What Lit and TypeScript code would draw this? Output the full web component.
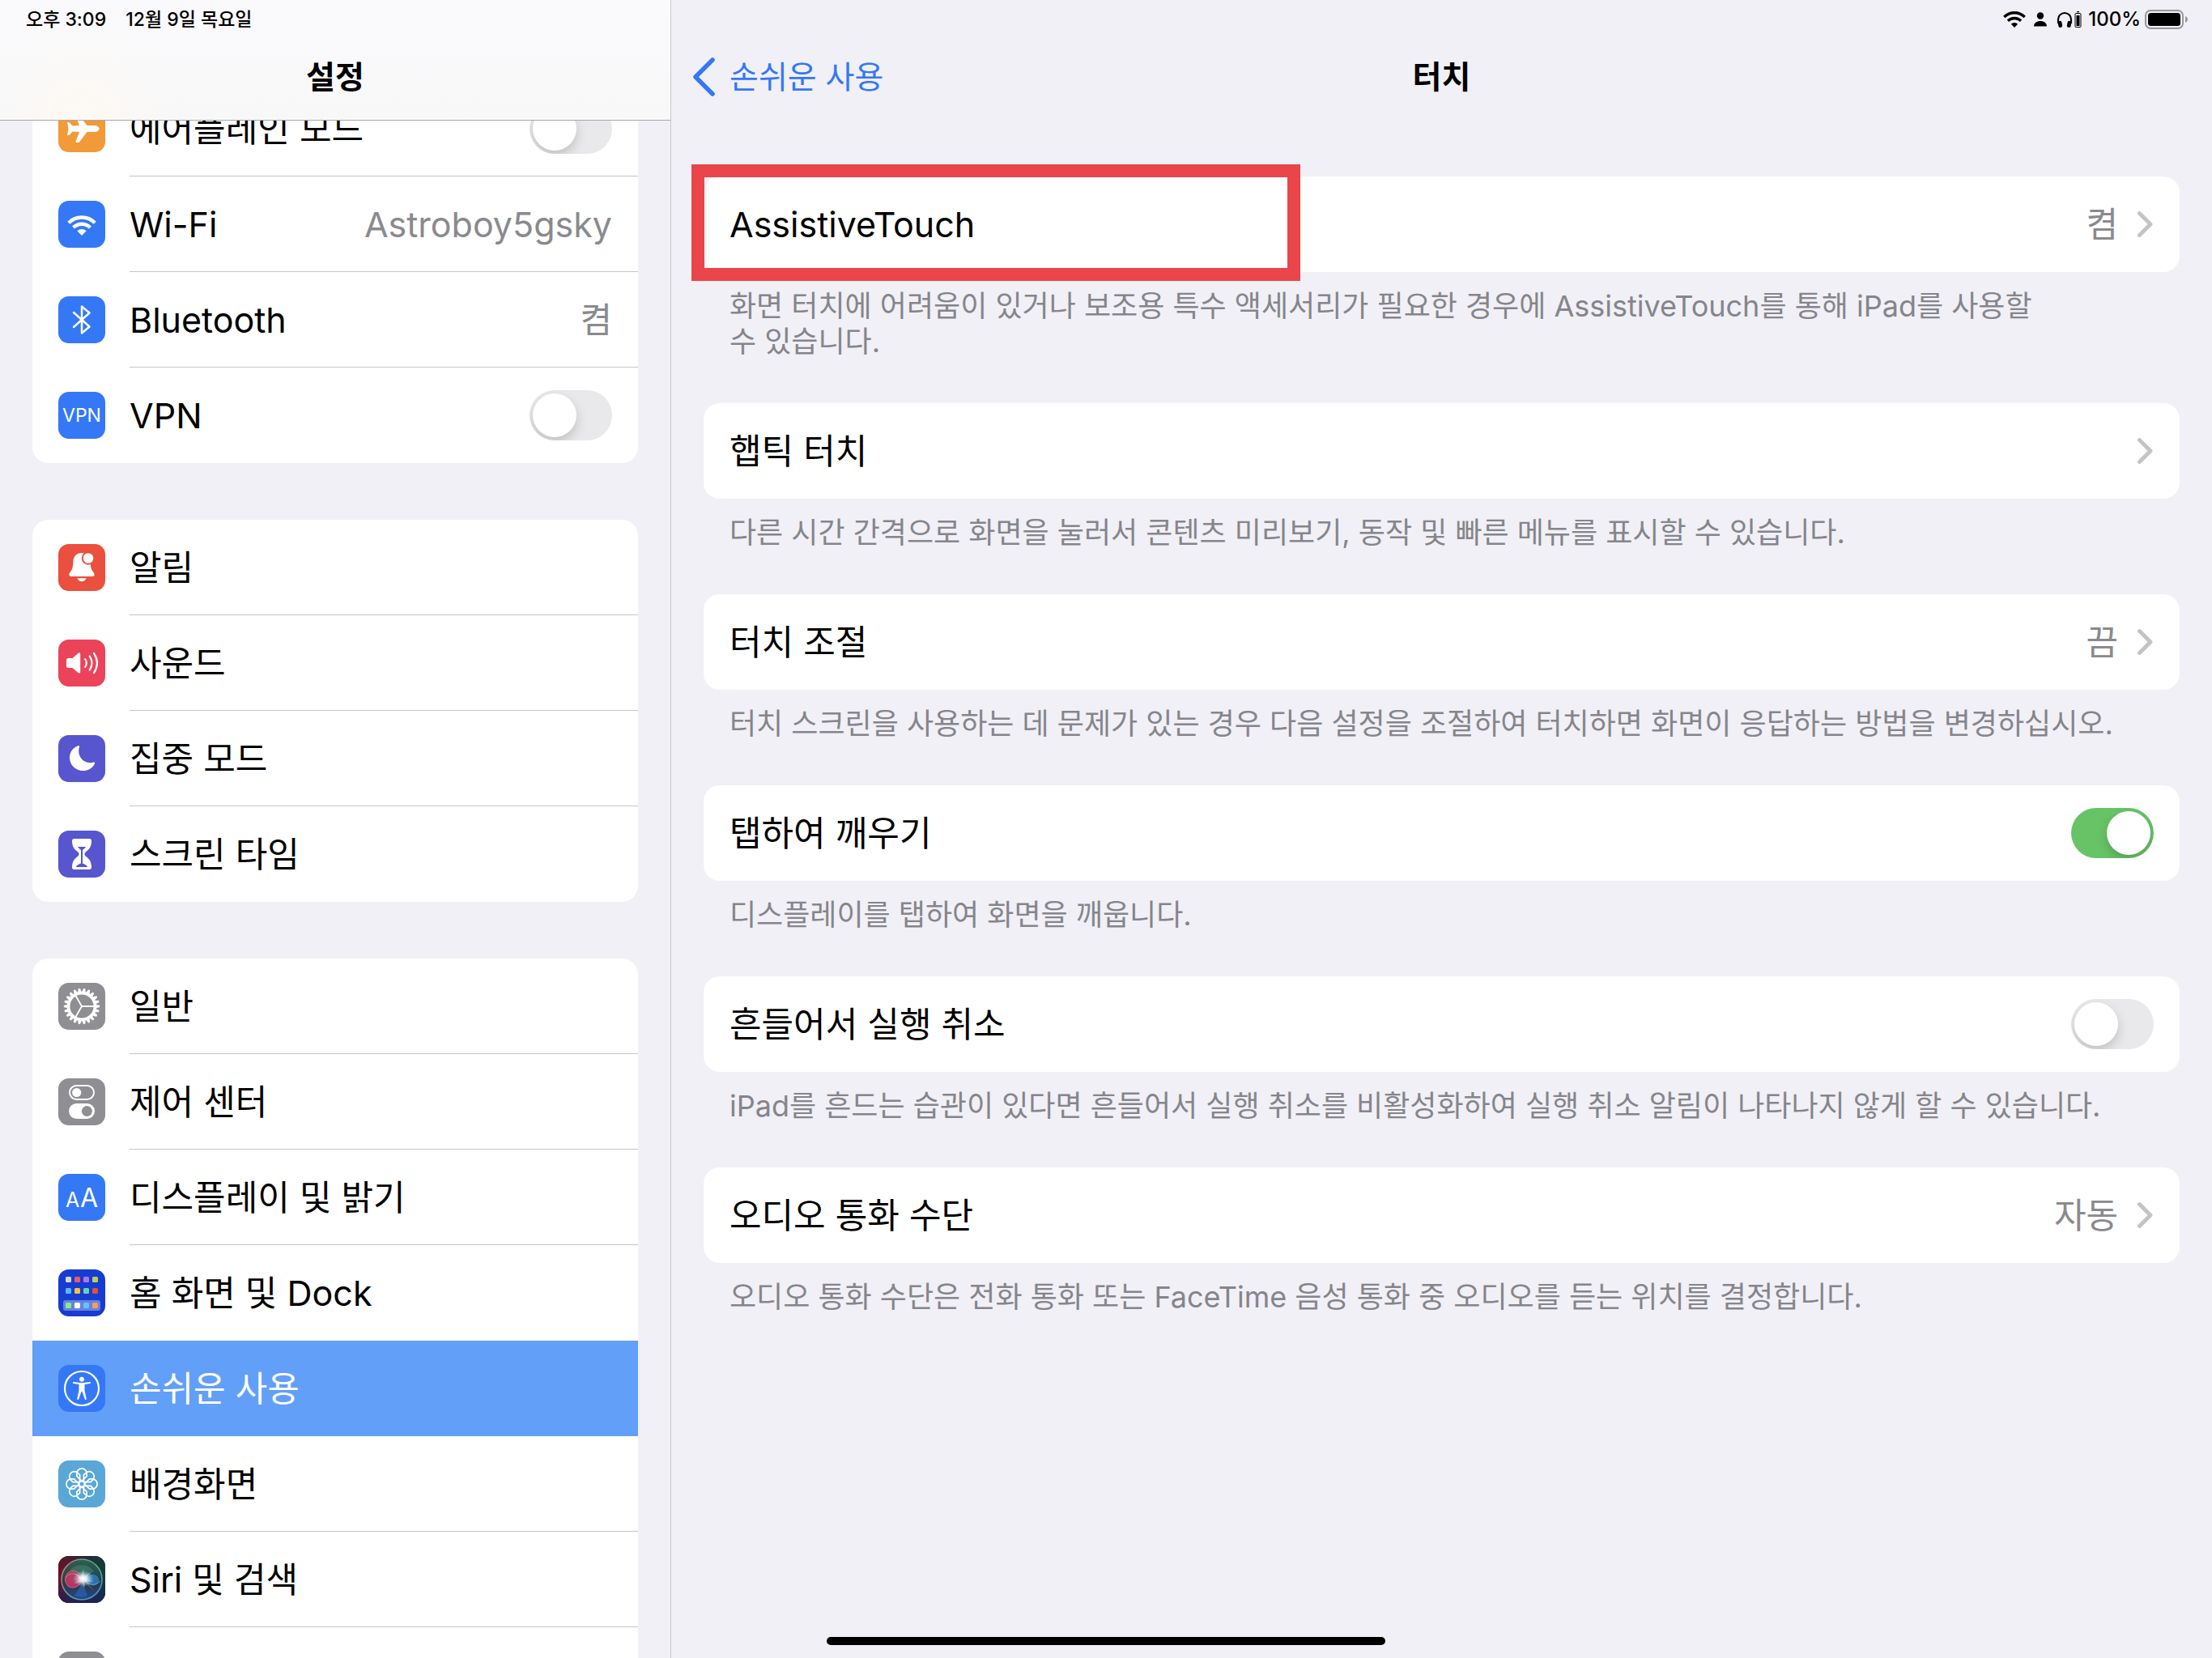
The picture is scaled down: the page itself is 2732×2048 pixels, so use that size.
import { LitElement, html, svg, css, nothing, type TemplateResult } from "lit";
import { customElement, property, state } from "lit/decorators.js";
import { classMap } from "lit/directives/class-map.js";

type Row = {
  id: string;
  label: string;
  icon: string;
  value?: string;
  toggle?: boolean;
  selected?: boolean;
};

type Setting = {
  id: string;
  label: string;
  note: string;
  value?: string;
  toggle?: boolean;
  on?: boolean;
  marked?: boolean;
};

const SIDEBAR: Row[][] = [
  [
    { id: "airplane", label: "에어플레인 모드", icon: "airplane", toggle: true },
    { id: "wifi", label: "Wi-Fi", icon: "wifi", value: "Astroboy5gsky" },
    { id: "bluetooth", label: "Bluetooth", icon: "bluetooth", value: "켬" },
    { id: "vpn", label: "VPN", icon: "vpn", toggle: true },
  ],
  [
    { id: "notifications", label: "알림", icon: "bell" },
    { id: "sound", label: "사운드", icon: "sound" },
    { id: "focus", label: "집중 모드", icon: "moon" },
    { id: "screentime", label: "스크린 타임", icon: "hourglass" },
  ],
  [
    { id: "general", label: "일반", icon: "gear" },
    { id: "control", label: "제어 센터", icon: "control" },
    { id: "display", label: "디스플레이 및 밝기", icon: "display" },
    { id: "home", label: "홈 화면 및 Dock", icon: "home" },
    { id: "accessibility", label: "손쉬운 사용", icon: "accessibility", selected: true },
    { id: "wallpaper", label: "배경화면", icon: "wallpaper" },
    { id: "siri", label: "Siri 및 검색", icon: "siri" },
    { id: "next", label: "", icon: "blank" },
  ],
];

const SETTINGS: Setting[] = [
  {
    id: "assistive",
    label: "AssistiveTouch",
    value: "켬",
    marked: true,
    note: "화면 터치에 어려움이 있거나 보조용 특수 액세서리가 필요한 경우에 AssistiveTouch를 통해 iPad를 사용할 수\u00a0있습니다.",
  },
  {
    id: "haptic",
    label: "햅틱 터치",
    note: "다른 시간 간격으로 화면을 눌러서 콘텐츠 미리보기, 동작 및 빠른 메뉴를 표시할 수 있습니다.",
  },
  {
    id: "accommodations",
    label: "터치 조절",
    value: "끔",
    note: "터치 스크린을 사용하는 데 문제가 있는 경우 다음 설정을 조절하여 터치하면 화면이 응답하는 방법을 변경하십시오.",
  },
  {
    id: "tapwake",
    label: "탭하여 깨우기",
    toggle: true,
    on: true,
    note: "디스플레이를 탭하여 화면을 깨웁니다.",
  },
  {
    id: "shake",
    label: "흔들어서 실행 취소",
    toggle: true,
    note: "iPad를 흔드는 습관이 있다면 흔들어서 실행 취소를 비활성화하여 실행 취소 알림이 나타나지 않게 할 수 있습니다.",
  },
  {
    id: "audio",
    label: "오디오 통화 수단",
    value: "자동",
    note: "오디오 통화 수단은 전화 통화 또는 FaceTime 음성 통화 중 오디오를 듣는 위치를 결정합니다.",
  },
];

const turns = (count: number) => Array.from({ length: count }, (_, i) => (360 / count) * i);

const HOME_TILES: [number, number, string][] = [
  [9, 9, "#d6d6cf"], [20, 9, "#ea5a63"], [31, 9, "#b074f0"], [42, 9, "#b7d156"],
  [9, 23, "#57b9f7"], [20, 23, "#f6c043"], [31, 23, "#6dd3a4"], [42, 23, "#e4503d"],
  [9, 41, "#86ef7b"], [20, 41, "#ffffff"], [31, 41, "#5cc8f8"], [42, 41, "#f2a055"],
];

const GLYPHS: Record<string, { bg: string; art: TemplateResult | typeof nothing }> = {
  airplane: {
    bg: "#f19a37",
    art: svg`<path fill="#fff" d="M50.500 29c0 2.500-3 4-6.500 4H35.500L26.500 44.800c-.7 1-1.600 1.200-2.600 1.200h-1.400c-.9 0-1.200-.8-.9-1.600L26 33l-8.500-.5-3.200 3.800c-.4.500-.9.700-1.500.700h-.8c-.6 0-.9-.4-.8-1L12.500 29l-1.300-7c-.1-.6.200-1 .8-1h.8c.6 0 1.100.2 1.500.7l3.200 3.800L26 25l-4.400-11.400c-.3-.8 0-1.600.9-1.600h1.400c1 0 1.900.2 2.600 1.200L35.500 25H44c3.500 0 6.500 1.500 6.500 4z"/>`,
  },
  wifi: {
    bg: "#3478f6",
    art: svg`<g fill="none" stroke="#fff" stroke-width="4.400"><path d="M12.800 27.200a23 23 0 0 1 32.400 0"/><path d="M18.600 33a15 15 0 0 1 20.800 0"/></g><path fill="#fff" d="M29 43l-5.600-5.800a8 8 0 0 1 11.200 0z"/>`,
  },
  bluetooth: {
    bg: "#3478f6",
    art: svg`<path fill="none" stroke="#fff" stroke-width="2.500" stroke-linejoin="round" stroke-linecap="round" d="M19 20l19.500 17.500L29 45.500v-33l9.500 8L19 38"/>`,
  },
  vpn: {
    bg: "#3478f6",
    art: svg`<text x="29" y="37" text-anchor="middle" fill="#fff" font-size="23">VPN</text>`,
  },
  bell: {
    bg: "#eb4f3d",
    art: svg`<path fill="#fff" d="M29 11c-6.500 0-10.500 4.500-10.700 11-.2 7-1 9.500-3.400 12.400-.9 1.100-1.500 2.200-1.500 3.400 0 1.400 1 2.200 2.600 2.200h26c1.600 0 2.600-.8 2.600-2.200 0-1.200-.6-2.300-1.500-3.400-2.400-2.900-3.200-5.400-3.400-12.400C39.500 15.500 35.500 11 29 11zM23.500 42.300h11c-.4 2.300-2.700 4-5.500 4s-5.100-1.700-5.500-4z"/><circle cx="37" cy="17.500" r="7.300" fill="#fff" stroke="#eb4f3d" stroke-width="2"/>`,
  },
  sound: {
    bg: "#eb445a",
    art: svg`<path fill="#fff" d="M12.500 23h5l7.300-6.200c1-.8 2.400-.3 2.400 1v22.400c0 1.300-1.400 1.800-2.400 1L17.500 35h-5A2.500 2.500 0 0 1 10 32.500v-7a2.500 2.500 0 0 1 2.500-2.500z"/><g fill="none" stroke="#fff" stroke-width="2.200" stroke-linecap="round"><path d="M33.200 24.200q3.200 4.800 0 9.600"/><path d="M38.700 20.500q5.600 8.500 0 17"/><path d="M44 16.800q8 12.200 0 24.400"/></g>`,
  },
  moon: {
    bg: "#5756ce",
    art: svg`<path fill="#fff" d="M24.500 13.200c1-.4 1.800.2 1.500 1.300C22.800 25 30 34.500 40 34.200c1.300 0 2.500-.3 3.600-.7 1-.3 1.700.4 1.400 1.400C43 40.300 37 44 30.300 44A16.200 16.200 0 0 1 14 27.700c0-6.500 4.200-12.500 10.500-14.500z"/>`,
  },
  hourglass: {
    bg: "#5756ce",
    art: svg`<path fill="#fff" d="M19.500 10h19c1.500 0 2.500 1 2.500 2.500 0 7-2.500 10-5.500 12.500-2 1.600-3 2.500-3 4s1 2.400 3 4c3 2.500 5.500 5.500 5.500 12.500 0 1.500-1 2.500-2.500 2.500h-19c-1.500 0-2.500-1-2.500-2.500 0-7 2.500-10 5.500-12.500 2-1.600 3-2.500 3-4s-1-2.400-3-4c-3-2.500-5.500-5.500-5.500-12.500 0-1.500 1-2.500 2.500-2.500z"/><path fill="#5756ce" d="M24 20h10c-.5 1.600-2.500 2.500-4 4v16.500c1.500.8 5 1.500 6.200 4.500H21.800c1.200-3 4.700-3.700 6.200-4.500V24c-1.500-1.500-3.500-2.400-4-4z"/>`,
  },
  gear: {
    bg: "#8e8e93",
    art: svg`<g stroke="#fff" fill="none"><circle cx="29" cy="29" r="16.400" stroke-width="3.600"/>${turns(22).map(
      (a) => svg`<path stroke="none" fill="#fff" transform="rotate(${a} 29 29)" d="M45.800 26.900h1.500l3.300.8q.6.200.6.800v1q0 .6-.6.800l-3.300.8h-1.500z"/>`,
    )}${[0, 120, 240].map((a) => svg`<path stroke-width="1.800" transform="rotate(${a} 29 29)" d="M29 29h15"/>`)}</g>`,
  },
  control: {
    bg: "#8e8e93",
    art: svg`<rect x="14" y="9" width="30" height="17" rx="8.500" fill="none" stroke="#fff" stroke-width="2"/><circle cx="22.700" cy="17.500" r="5.600" fill="#fff"/><rect x="13" y="31" width="32" height="19" rx="9.500" fill="#fff"/><circle cx="35.400" cy="40.500" r="6.500" fill="#8e8e93"/>`,
  },
  display: {
    bg: "#3478f6",
    art: svg`<text x="9" y="41" fill="#fff" font-size="25">A</text><text x="27" y="41" fill="#fff" font-size="32">A</text>`,
  },
  home: {
    bg: "#173cd2",
    art: svg`<rect x="6" y="38" width="46" height="13" rx="3" fill="#fff" opacity=".35"/>${HOME_TILES.map(
      ([x, y, fill]) => svg`<rect x="${x}" y="${y}" width="7" height="7" rx="1.500" fill="${fill}"/>`,
    )}`,
  },
  accessibility: {
    bg: "#3478f6",
    art: svg`<circle cx="29" cy="29" r="21" fill="none" stroke="#fff" stroke-width="2.200"/><circle cx="29" cy="17.700" r="2.900" fill="#fff"/><path fill="#fff" d="M19 21l7.500 1h5l7.500-1c1.400-.1 1.500 1.800.2 2L32.500 24v7.500l2.200 10.300c.3 1.400-1.500 1.800-1.900.5L29.500 33h-1l-3.300 9.300c-.4 1.300-2.200.9-1.900-.5l2.200-10.300V24l-6.700-1c-1.300-.2-1.200-2.100.2-2z"/>`,
  },
  wallpaper: {
    bg: "#59a7d7",
    art: svg`<g fill="none" stroke="#fff" stroke-width="1.700" stroke-linejoin="round"><circle cx="29" cy="29" r="3.400"/>${turns(8).map(
      (a) => svg`<path transform="rotate(${a} 29 29)" d="M29 25.600L22.900 19.500V16a6.100 6.100 0 0 1 12.200 0V19.500z"/>`,
    )}</g>`,
  },
  siri: {
    bg: "#15202c",
    art: svg`<defs>
      <linearGradient id="sb" x1="0" y1="0" x2="1" y2="0"><stop offset="0" stop-color="#6d1026"/><stop offset=".5" stop-color="#252a38"/><stop offset="1" stop-color="#153a3a"/></linearGradient>
      <linearGradient id="sv" x1="0" y1="0" x2="0" y2="1"><stop offset=".5" stop-color="#1a1f60" stop-opacity="0"/><stop offset="1" stop-color="#1a1f60" stop-opacity=".8"/></linearGradient>
      <linearGradient id="sr" x1="0" y1="0" x2="1" y2="1"><stop offset="0" stop-color="#e08a94"/><stop offset=".5" stop-color="#5fc596"/><stop offset="1" stop-color="#5fa0e8"/></linearGradient>
      <radialGradient id="sg"><stop offset="0" stop-color="#fff"/><stop offset=".35" stop-color="#eefafb" stop-opacity=".85"/><stop offset="1" stop-color="#9fd6dc" stop-opacity="0"/></radialGradient>
      <radialGradient id="sp"><stop offset="0" stop-color="#e2447c" stop-opacity=".7"/><stop offset="1" stop-color="#d8305f" stop-opacity=".8"/></radialGradient>
      <linearGradient id="st" x1="0" y1="0" x2="0" y2="1"><stop offset="0" stop-color="#2b7a5c"/><stop offset=".6" stop-color="#2a3c4c"/><stop offset="1" stop-color="#2459a8"/></linearGradient>
      </defs>
      <rect width="58" height="58" fill="url(#sb)"/><rect width="58" height="58" fill="url(#sv)"/>
      <circle cx="29" cy="29" r="25" fill="url(#st)" opacity=".7"/>
      <path d="M14 17C24 8 38 10 44 19L32 27z" fill="#4f9d7e" opacity=".4"/>
      <path d="M31 28C27 20 19 16 13 20c-6 4-6 14 0 18 6 3 14 0 18-10z" fill="url(#sp)" stroke="#e88aa2" stroke-opacity=".6"/>
      <path d="M31 29c5-6 11-8 16-5 5 4 4 10-1 12-5 2-10-1-15-7z" fill="#2f86dd" opacity=".7"/>
      <path d="M32 29L45 44 35 34z" fill="#e8799b" opacity=".7"/><path d="M30 32L20 49q8 3 16 0z" fill="#2f7be0" opacity=".4"/>
      <path d="M9 27c6-8 14-6 22 2s14 8 21 2" fill="none" stroke="#7fe0d0" stroke-width="1" opacity=".55"/>
      <ellipse cx="31" cy="28" rx="13" ry="10" fill="url(#sg)"/>
      <path fill="#fff" opacity=".3" d="M31 15l1 10L40 20l-6 8 10 4-11-1-1 9-3-8-10 2 8-5-7-8 8 5z"/>
      <circle cx="29" cy="29" r="25" fill="none" stroke="url(#sr)" stroke-width="1.600" opacity=".8"/>`,
  },
  blank: { bg: "#8e8e93", art: nothing },
};

const chevron = html`<svg class="chevron" viewBox="0 0 20 34" width="20" height="34" aria-hidden="true">
  <path d="M2.500 3.500L16 17 2.500 30.500" fill="none" stroke="#c4c4c7" stroke-width="4.800" stroke-linecap="round" stroke-linejoin="round" />
</svg>`;

const shared = css`
  * {
    box-sizing: border-box;
  }
  a {
    color: inherit;
    text-decoration: none;
  }
`;

@customElement("toggle-switch")
export class ToggleSwitch extends LitElement {
  @property({ type: Boolean }) on = false;
  @property() name = "";

  static styles = css`
    :host {
      display: block;
      flex: none;
    }
    .track {
      box-sizing: border-box;
      appearance: none;
      display: block;
      width: 102px;
      height: 62px;
      margin: 0;
      padding: 4px;
      border-radius: 31px;
      background: #e9e9eb;
      overflow: hidden;
      cursor: pointer;
    }
    .track::before {
      content: "";
      display: block;
      width: 54px;
      height: 54px;
      border-radius: 50%;
      background: #fff;
      box-shadow: 0 6px 14px rgba(0, 0, 0, 0.18);
    }
    .track:checked {
      background: #67c466;
    }
    .track:checked::before {
      margin-left: 40px;
    }
  `;

  render() {
    return html`<input
      class="track"
      type="checkbox"
      role="switch"
      aria-label=${this.name}
      .checked=${this.on}
      @change=${(e: Event) => (this.on = (e.target as HTMLInputElement).checked)}
    />`;
  }
}

@customElement("app-icon")
export class AppIcon extends LitElement {
  @property() name = "blank";

  static styles = css`
    :host {
      display: block;
      flex: none;
    }
    .tile {
      display: block;
      width: 58px;
      height: 58px;
      border-radius: 13px;
    }
  `;

  render() {
    const glyph = GLYPHS[this.name];
    return html`<svg class="tile" viewBox="0 0 58 58" aria-hidden="true">
      <rect width="58" height="58" fill=${glyph.bg} />${glyph.art}
    </svg>`;
  }
}

@customElement("app-root")
export class AppRoot extends LitElement {
  @state() private selected = "accessibility";

  static styles = [
    shared,
    css`
      :host {
        display: block;
        font-family: Inter, "Noto Sans CJK KR", sans-serif;
        font-size: 43px;
        line-height: 56px;
        color: #000;
      }
      .screen {
        position: relative;
        display: grid;
        grid-template-columns: minmax(0, 829fr) minmax(0, 1903fr);
        height: 100vh;
        overflow: hidden;
        background: #f1f0f6;
      }
      .sidebar {
        position: relative;
        min-height: 0;
        overflow: hidden;
        border-right: 1px solid #c9c9cd;
      }
      .topbar {
        position: absolute;
        top: 0;
        left: 0;
        right: 0;
        z-index: 1;
        background: radial-gradient(circle at 12% 100%, #fdf9f3, rgba(253, 249, 243, 0) 16%),
          linear-gradient(#fafafc, #f8f8f9);
        border-bottom: 1px solid #a8a8ad;
      }
      .status {
        display: flex;
        align-items: center;
        height: 48px;
        padding: 0 30px 0 32px;
        font-size: 23px;
        line-height: 30px;
        font-weight: 500;
      }
      .time {
        margin-right: 24px;
      }
      .status.right {
        justify-content: flex-end;
        font-size: 24px;
      }
      .status svg {
        display: block;
        flex: none;
      }
      .bar {
        display: grid;
        grid-template-columns: 1fr auto 1fr;
        align-items: center;
        height: 100px;
        padding: 0 25px 6px;
        font-size: 39px;
      }
      .title {
        grid-column: 2;
        margin: 0;
        font-size: 39px;
        font-weight: 600;
      }
      .back {
        display: flex;
        align-items: center;
        gap: 17px;
        color: #3478f6;
      }
      .list {
        display: flex;
        flex-direction: column;
        gap: 70px;
        padding: 100px 40px 0;
      }
      .card {
        flex: none;
        border-radius: 20px;
        background: #fff;
        overflow: hidden;
      }
      .row {
        display: flex;
        align-items: center;
        gap: 30px;
        height: 118px;
        padding-left: 32px;
      }
      .body {
        flex: 1;
        display: flex;
        align-items: center;
        gap: 24px;
        height: 118px;
        padding-right: 32px;
        border-bottom: 1px solid #c6c6c8;
      }
      .row:last-child .body,
      .row.selected .body,
      .row.plain .body {
        border-bottom-color: transparent;
      }
      .row.selected {
        background: #629ff8;
        color: #fff;
      }
      .label {
        flex: 1;
        white-space: nowrap;
      }
      .value {
        color: #8a8a8e;
        white-space: nowrap;
      }
      .content {
        padding: 70px 40px 0;
      }
      .setting {
        position: relative;
        display: flex;
        align-items: center;
        gap: 24px;
        height: 118px;
        padding: 0 32px;
        border-radius: 20px;
        background: #fff;
      }
      .note {
        margin: 0;
        padding: 20px 32px 54px;
        font-size: 36px;
        line-height: 44px;
        color: #85858b;
        word-break: keep-all;
      }
      .chevron {
        display: block;
        flex: none;
      }
      .mark {
        position: absolute;
        top: -15px;
        bottom: -11px;
        left: -15px;
        width: 752px;
        border: 16px solid #e9454a;
        pointer-events: none;
      }
      .indicator {
        position: absolute;
        bottom: 16px;
        left: 50%;
        width: 690px;
        height: 10px;
        margin-left: -345px;
        border-radius: 5px;
        background: #000;
      }
      .wifi {
        margin-right: 10px;
      }
      .person {
        margin-right: 12px;
      }
      .phones {
        margin-right: 8px;
      }
      .battery {
        margin-left: 5px;
      }
    `,
  ];

  private renderRow(row: Row, next?: Row) {
    const picked = row.id === this.selected;
    const classes = classMap({ row: true, selected: picked, plain: next?.id === this.selected });
    const body = html`<app-icon name=${row.icon}></app-icon>
      <span class="body">
        <span class="label">${row.label}</span>
        ${row.value ? html`<span class="value">${row.value}</span>` : nothing}
        ${row.toggle ? html`<toggle-switch name=${row.label}></toggle-switch>` : nothing}
      </span>`;
    return row.toggle
      ? html`<div class=${classes}>${body}</div>`
      : html`<a class=${classes} href="#${row.id}" @click=${() => (this.selected = row.id)}>${body}</a>`;
  }

  private renderSetting(item: Setting) {
    return html`<section>
      ${item.toggle
        ? html`<div class="setting">
            <span class="label">${item.label}</span>
            <toggle-switch name=${item.label} ?on=${item.on}></toggle-switch>
          </div>`
        : html`<a class="setting" href="#${item.id}">
            <span class="label">${item.label}</span>
            ${item.value ? html`<span class="value">${item.value}</span>` : nothing} ${chevron}
            ${item.marked ? html`<span class="mark"></span>` : nothing}
          </a>`}
      <p class="note">${item.note}</p>
    </section>`;
  }

  render() {
    return html`<div class="screen">
      <aside class="sidebar">
        <header class="topbar">
          <div class="status"><span class="time">오후 3:09</span><span>12월 9일 목요일</span></div>
          <div class="bar"><h1 class="title">설정</h1></div>
        </header>
        <nav class="list">
          ${SIDEBAR.map(
            (group) => html`<div class="card">${group.map((row, i) => this.renderRow(row, group[i + 1]))}</div>`,
          )}
        </nav>
      </aside>
      <main>
        <div class="status right">
          <svg class="wifi" viewBox="0 0 28 20" width="28" height="20" aria-hidden="true">
            <g fill="none" stroke="#000" stroke-width="3.400">
              <path d="M1.300 7a18 18 0 0 1 25.400 0" /><path d="M5.900 11.800a11.600 11.600 0 0 1 16.200 0" />
            </g>
            <path d="M14 20l-4.200-4.200a6 6 0 0 1 8.400 0z" />
          </svg>
          <svg class="person" viewBox="0 0 16 18" width="16" height="18" aria-hidden="true">
            <circle cx="8" cy="4.500" r="4.200" /><path d="M0 17.500c0-4 3.500-6.500 8-6.500s8 2.500 8 6.500z" />
          </svg>
          <svg class="phones" viewBox="0 0 31 20" width="31" height="20" aria-hidden="true">
            <path d="M2 15V10a8 8 0 0 1 16 0v5" fill="none" stroke="#000" stroke-width="2.200" />
            <rect x="2" y="12" width="4.800" height="8" rx="2" transform="rotate(-10 4 16)" />
            <rect x="13.200" y="12" width="4.800" height="8" rx="2" transform="rotate(10 16 16)" />
            <rect x="23" y="2.500" width="7" height="17" rx="1" fill="none" stroke="#000" />
            <rect x="24.500" y="5" width="4" height="13" /><rect x="25" y="0" width="3" height="1.200" />
          </svg>
          <span>100%</span>
          <svg class="battery" viewBox="0 0 53 24" width="53" height="24" aria-hidden="true">
            <rect x="1" y="1" width="46" height="22" rx="6" fill="none" stroke="#97979c" stroke-width="2" />
            <rect x="4" y="4" width="40" height="16" rx="3.500" />
            <path d="M50 8c4 1.500 4 6.500 0 8z" fill="#97979c" />
          </svg>
        </div>
        <div class="bar">
          <a class="back" href="#accessibility">
            <svg viewBox="0 0 30 48" width="30" height="48" aria-hidden="true">
              <path d="M26 3L5 24l21 21" fill="none" stroke="#3478f6" stroke-width="5.500" stroke-linecap="round" stroke-linejoin="round" />
            </svg>
            <span>손쉬운 사용</span>
          </a>
          <h2 class="title">터치</h2>
        </div>
        <div class="content">${SETTINGS.map((item) => this.renderSetting(item))}</div>
      </main>
      <div class="indicator"></div>
    </div>`;
  }
}
